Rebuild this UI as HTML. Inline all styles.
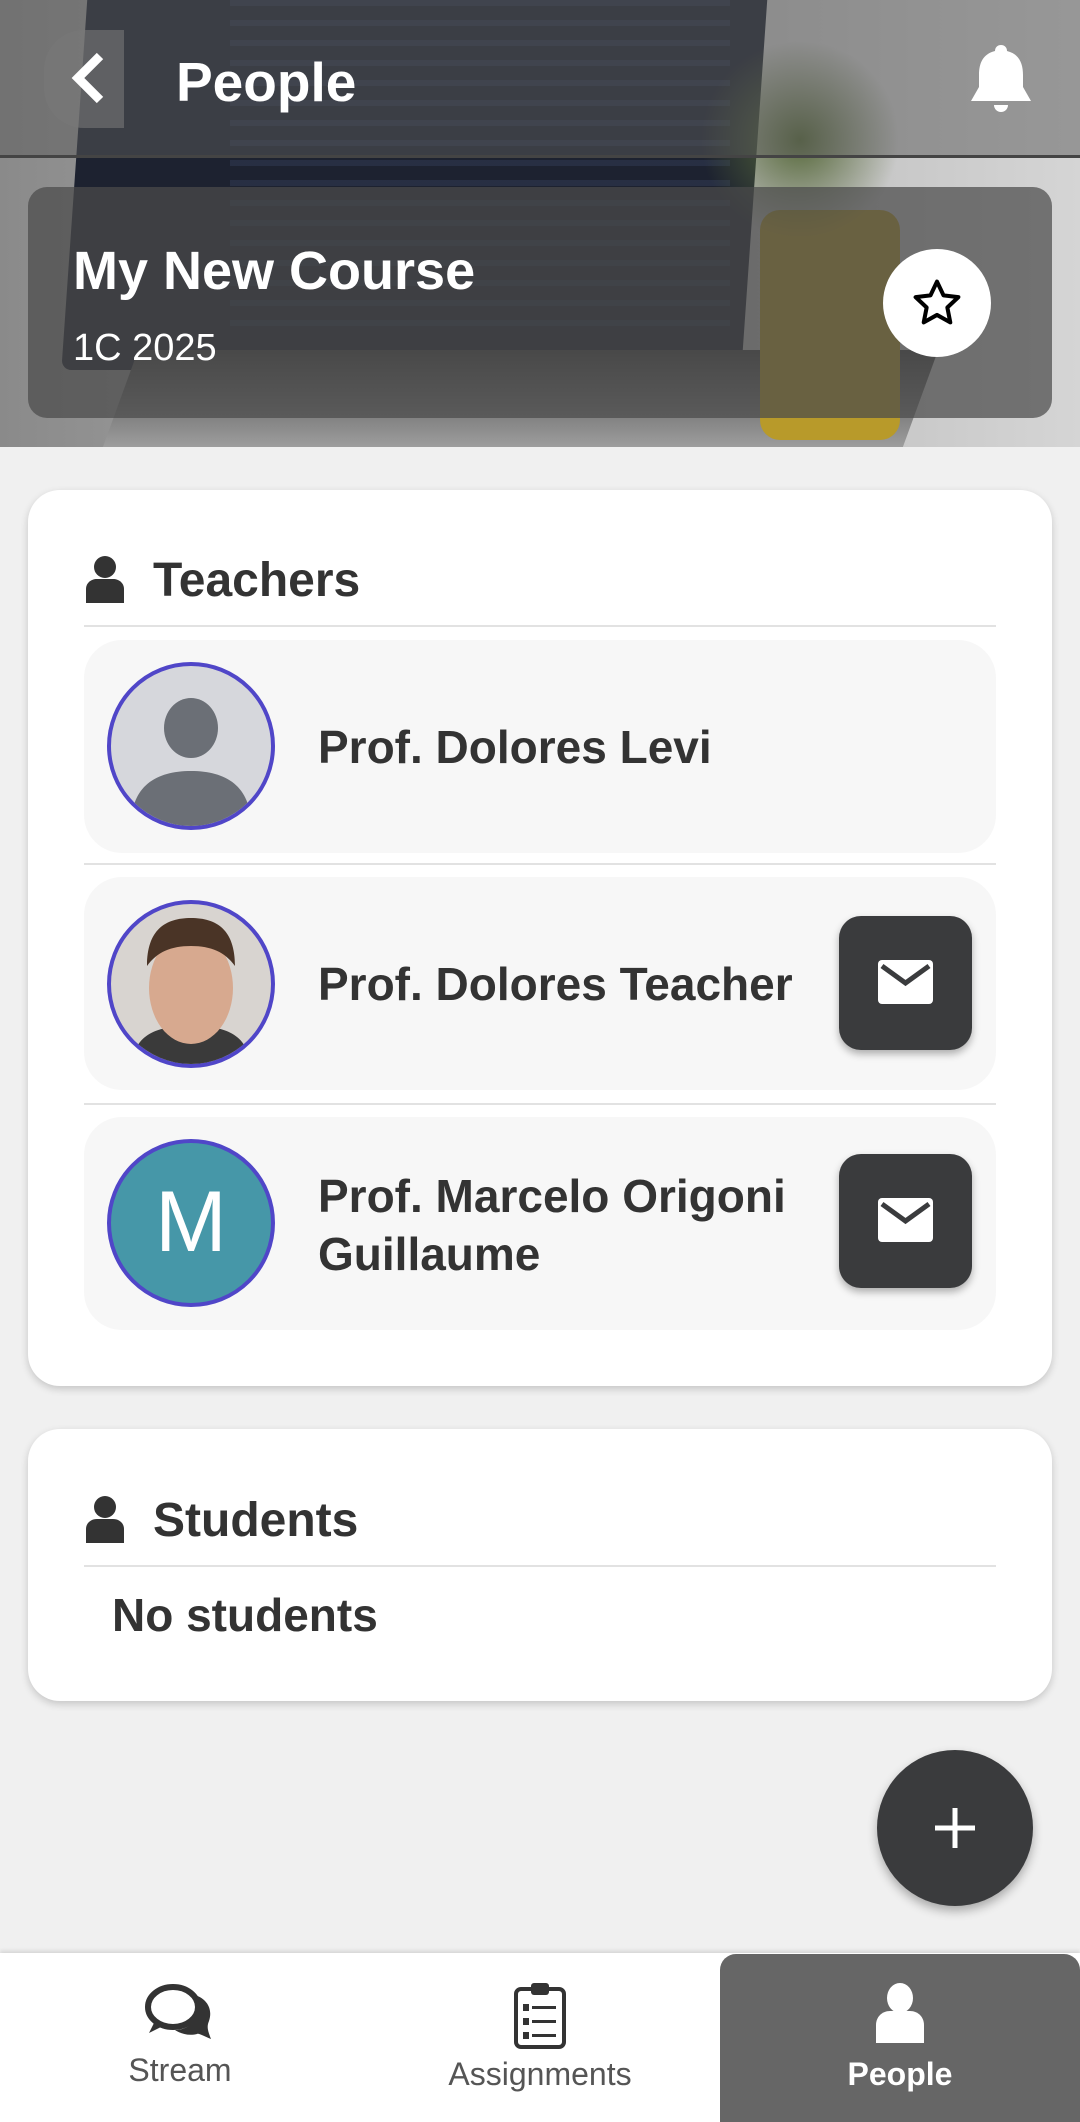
<!DOCTYPE html>
<html><head><meta charset="utf-8"><style>
*{margin:0;padding:0;box-sizing:border-box}
body{width:1080px;height:2122px;background:#f0f0f0;font-family:"Liberation Sans",Roboto,sans-serif;position:relative;overflow:hidden;color:#333}
.abs{position:absolute}
.hero{left:0;top:0;width:1080px;height:447px;overflow:hidden;background:linear-gradient(90deg,#8a8a8a,#b8b8b8 60%,#d5d5d5)}
.card{background:#fff;border-radius:32px;box-shadow:0 3px 8px rgba(0,0,0,.18)}
.row{background:#f7f7f7;border-radius:38px;left:84px;width:912px;height:213px}
.name{font-weight:bold;font-size:46px;color:#333;left:318px}
.av{width:168px;height:168px;border-radius:50%;border:4px solid #5046c8;left:107px;overflow:hidden}
.mail{width:133px;height:134px;left:839px;background:#3a3b3d;border-radius:22px;box-shadow:0 4px 8px rgba(0,0,0,.3)}
.mail svg{position:absolute;left:37px;top:40px}
.div{left:84px;width:912px;height:2px;background:#e2e2e2}
.h{font-weight:bold;font-size:48px;color:#333;left:153px}
</style></head><body>
<div class="abs hero">
  <div class="abs" style="left:75px;top:-20px;width:680px;height:390px;background:#1d2230;transform:skewX(-4deg);border-radius:10px"></div>
  <div class="abs" style="left:230px;top:0;width:500px;height:340px;background:repeating-linear-gradient(180deg,#2a3248 0 6px,#1d2230 6px 20px);opacity:.8"></div>
  <div class="abs" style="left:120px;top:350px;width:800px;height:100px;background:linear-gradient(#444,#a0a0a0);transform:skewX(-20deg)"></div>
  <div class="abs" style="left:760px;top:210px;width:140px;height:230px;background:#b89a2a;border-radius:20px"></div>
  <div class="abs" style="left:700px;top:40px;width:200px;height:200px;background:radial-gradient(#56683a,transparent 70%)"></div>
  <div class="abs" style="left:0;top:0;width:1080px;height:158px;background:rgba(90,90,90,.5);border-bottom:3px solid #444"></div>
  <div class="abs" style="left:44px;top:30px;width:80px;height:98px;background:rgba(120,120,120,.6);border-radius:40px 0 0 40px"></div>
</div>
<svg class="abs" style="left:70px;top:52px" width="38" height="52" viewBox="0 0 38 52"><path d="M30 4 L8 26 L30 48" stroke="#fff" stroke-width="9" fill="none"/></svg>
<div class="abs" style="left:176px;top:50px;font-size:55px;font-weight:bold;color:#fff">People</div>
<svg class="abs" style="left:968px;top:43px" width="66" height="72" viewBox="0 0 66 72"><path d="M33 2c-4 0-6 3-6 6C15 11 11 20 11 32v12L3 58h60L55 44V32C55 20 51 11 39 8c0-3-2-6-6-6z" fill="#fff"/><path d="M26 62a7 7 0 0014 0z" fill="#fff"/></svg>
<div class="abs" style="left:28px;top:187px;width:1024px;height:231px;background:rgba(75,75,75,.72);border-radius:19px"></div>
<div class="abs" style="left:73px;top:240px;font-size:54px;font-weight:bold;color:#fff">My New Course</div>
<div class="abs" style="left:73px;top:327px;font-size:38px;color:#fff">1C 2025</div>
<div class="abs" style="left:883px;top:249px;width:108px;height:108px;border-radius:50%;background:#fff"></div>
<svg class="abs" style="left:910px;top:276px" width="54" height="54" viewBox="0 0 24 24"><path d="M12 2.5l2.9 6.1 6.6.8-4.9 4.6 1.3 6.6L12 17.3l-5.9 3.3 1.3-6.6L2.5 9.4l6.6-.8z" fill="none" stroke="#000" stroke-width="1.8" stroke-linejoin="round"/></svg>

<div class="abs card" style="left:28px;top:490px;width:1024px;height:896px"></div>
<svg class="abs" style="left:84px;top:555px" width="42" height="48" viewBox="0 0 42 48"><circle cx="21" cy="12" r="11" fill="#333"/><path d="M2 48V34c0-6 5-10 11-10h16c6 0 11 4 11 10v14z" fill="#333"/></svg>
<div class="abs h" style="top:553px">Teachers</div>
<div class="abs div" style="top:625px"></div>
<div class="abs row" style="top:640px"></div>
<div class="abs av" style="top:662px;background:#d6d7dc"><svg width="160" height="160" viewBox="0 0 160 160"><ellipse cx="80" cy="62" rx="27" ry="30" fill="#6b6f76"/><path d="M20 160c0-40 25-55 60-55s60 15 60 55z" fill="#6b6f76"/></svg></div>
<div class="abs name" style="top:720px">Prof. Dolores Levi</div>
<div class="abs div" style="top:863px"></div>
<div class="abs row" style="top:877px"></div>
<div class="abs av" style="top:900px;background:#d8d4d0"><svg width="160" height="160" viewBox="0 0 160 160"><path d="M20 160c5-30 25-38 60-38s55 8 60 38z" fill="#3a3a3a"/><ellipse cx="80" cy="84" rx="42" ry="56" fill="#d7a98f"/><path d="M36 62c0-36 18-48 44-48s44 12 44 48c-10-14-24-20-44-20s-34 6-44 20z" fill="#4a3426"/></svg></div>
<div class="abs name" style="top:957px">Prof. Dolores Teacher</div>
<div class="abs mail" style="top:916px"><svg width="59" height="52" viewBox="0 0 59 52"><rect x="2" y="4" width="55" height="44" rx="4" fill="#fff"/><path d="M6 10l23.5 17L53 10" stroke="#3a3b3d" stroke-width="5" fill="none"/></svg></div>
<div class="abs div" style="top:1103px"></div>
<div class="abs row" style="top:1117px"></div>
<div class="abs av" style="top:1139px;background:#4697a8;color:#fff;font-size:86px;text-align:center;line-height:158px">M</div>
<div class="abs name" style="top:1167px;line-height:58px">Prof. Marcelo Origoni<br>Guillaume</div>
<div class="abs mail" style="top:1154px"><svg width="59" height="52" viewBox="0 0 59 52"><rect x="2" y="4" width="55" height="44" rx="4" fill="#fff"/><path d="M6 10l23.5 17L53 10" stroke="#3a3b3d" stroke-width="5" fill="none"/></svg></div>

<div class="abs card" style="left:28px;top:1429px;width:1024px;height:272px"></div>
<svg class="abs" style="left:84px;top:1495px" width="42" height="48" viewBox="0 0 42 48"><circle cx="21" cy="12" r="11" fill="#333"/><path d="M2 48V34c0-6 5-10 11-10h16c6 0 11 4 11 10v14z" fill="#333"/></svg>
<div class="abs h" style="top:1493px">Students</div>
<div class="abs div" style="top:1565px"></div>
<div class="abs" style="left:112px;top:1588px;font-size:46px;font-weight:bold;color:#333">No students</div>

<div class="abs" style="left:877px;top:1750px;width:156px;height:156px;border-radius:50%;background:#3a3b3d;box-shadow:0 5px 10px rgba(0,0,0,.3)"></div>
<svg class="abs" style="left:933px;top:1806px" width="44" height="44"><path d="M22 2v40M2 22h40" stroke="#fff" stroke-width="5"/></svg>

<div class="abs" style="left:0;top:1953px;width:1080px;height:169px;background:#fff;box-shadow:0 -2px 4px rgba(0,0,0,.12)"></div>
<div class="abs" style="left:720px;top:1954px;width:360px;height:168px;background:#666;border-radius:16px 16px 0 0"></div>
<svg class="abs" style="left:143px;top:1983px" width="74" height="60" viewBox="0 0 74 60"><ellipse cx="30" cy="24" rx="25" ry="20" fill="none" stroke="#333" stroke-width="6"/><path d="M12 38l-6 12 14-7z" fill="#333"/><path d="M52 12c12 4 18 14 14 26-2 5-2 8 2 18-8-3-12-6-14-5-8 2-16 0-22-4 14 0 26-10 20-35z" fill="#333"/></svg>
<div class="abs" style="left:0;width:360px;top:2052px;text-align:center;font-size:32px;color:#555">Stream</div>
<svg class="abs" style="left:513px;top:1980px" width="54" height="70" viewBox="0 0 54 70"><rect x="3" y="9" width="48" height="58" rx="5" fill="none" stroke="#333" stroke-width="4"/><rect x="18" y="3" width="18" height="12" rx="3" fill="#333"/><g fill="#333"><rect x="10" y="24" width="6" height="7"/><rect x="19" y="26" width="24" height="3"/><rect x="10" y="38" width="6" height="7"/><rect x="19" y="40" width="24" height="3"/><rect x="10" y="52" width="6" height="7"/><rect x="19" y="54" width="24" height="3"/></g></svg>
<div class="abs" style="left:360px;width:360px;top:2056px;text-align:center;font-size:32px;color:#555">Assignments</div>
<svg class="abs" style="left:874px;top:1983px" width="52" height="60" viewBox="0 0 52 60"><ellipse cx="26" cy="15" rx="13" ry="15" fill="#fff"/><path d="M2 60V42c0-8 6-14 14-14h20c8 0 14 6 14 14v18z" fill="#fff"/></svg>
<div class="abs" style="left:720px;width:360px;top:2056px;text-align:center;font-size:32px;font-weight:bold;color:#fff">People</div>
</body></html>
